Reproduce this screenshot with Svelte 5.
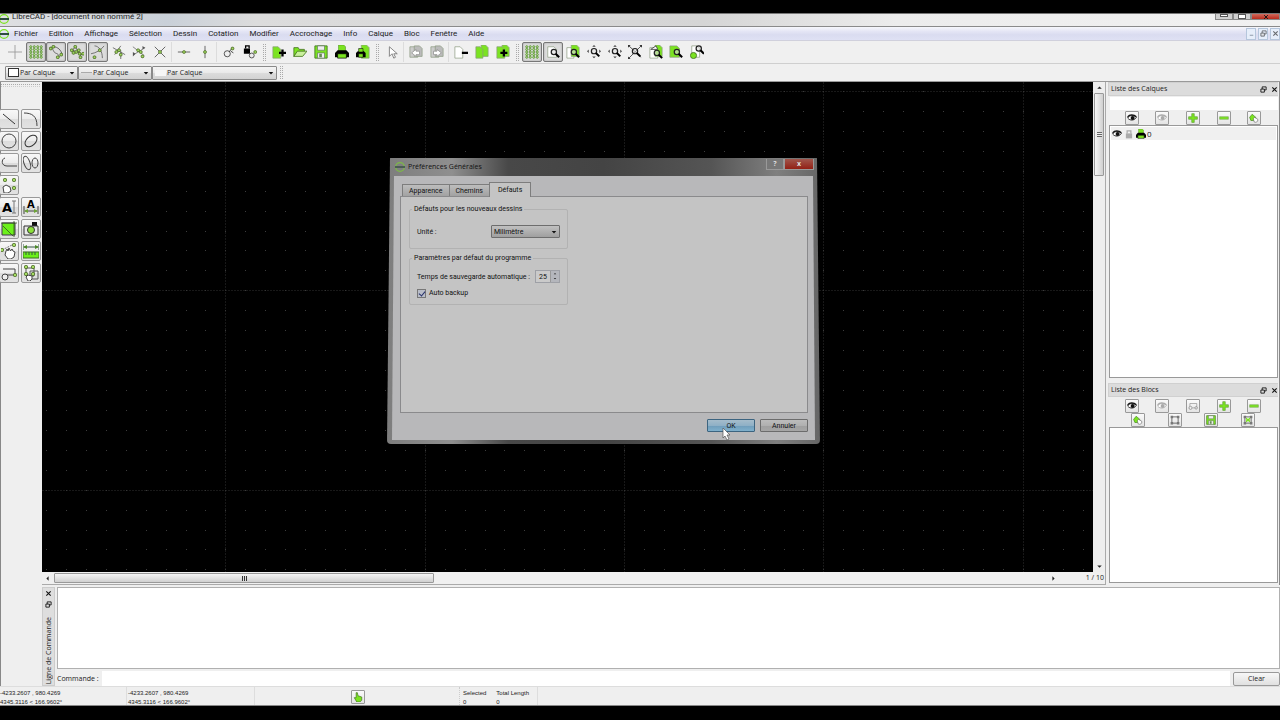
<script>
	const menus = [
		'Fichier', 'Edition', 'Affichage', 'Sélection', 'Dessin', 'Cotation', 'Modifier',
		'Accrochage', 'Info', 'Calque', 'Bloc', 'Fenêtre', 'Aide'
	];

	// every icon is drawn on a 16 x 16 box
	const G = '#7be321';
	const dot = (x, y) =>
		`<rect x="${x - 1.5}" y="${y - 1.5}" width="3" height="3" rx="1" fill="#a4dc62" stroke="#4b6b25"/>`;
	const lens = (x, y) =>
		`<circle cx="${x}" cy="${y}" r="3" fill="#ddd" fill-opacity=".6" stroke="#222" stroke-width="1.4"/><path d="M${x + 2} ${y + 2}l4 4" stroke="#000" stroke-width="2.4"/>`;
	const sheet = (x, y, w, h, fill) =>
		`<path d="M${x} ${y}h${w - 3}l3 3v${h - 3}h-${w}z" fill="${fill}" stroke="#8a9a80" stroke-width=".8"/>`;
	const arrows =
		'<path d="M8 0l2 2H6zM8 15l2-2H6zM0 7l2-2v4zM16 7l-2-2v4z" fill="#444"/>';
	const printer = `<path d="M4 0h6l2 2v5H4z" fill="${G}" stroke="#4a8a18" stroke-width=".6"/><path d="M3 6h10l3 3v5H0V9z" fill="#000"/><path d="M3 10h10v5H3z" fill="${G}" stroke="#000" stroke-width=".8"/>`;
	const eye = (c) =>
		`<path d="M1 8C4 3 11 3 15 7C12 12 5 13 1 8z" fill="#fff" stroke="${c}" stroke-width="1.4"/><circle cx="9" cy="8" r="3.2" fill="${c}"/><path d="M1 6C4 2 11 2 15 6" fill="none" stroke="${c}" stroke-width="2"/>`;
	const hand =
		'<path d="M5 8l1-2 1 2 1-3 1.500 3 1.500-2 1 2 2 1-1 5-3 2H7L4 12z" fill="#fff" stroke="#444"/>';
	const edit = `<path d="M1 7l4-5 6 5-3 5H3z" fill="${G}" stroke="#3f7f18"/><path d="M7 9l2-2 5 3v3l-3 2-3-1z" fill="#fff" stroke="#666"/>`;
	const frame =
		'<path d="M3 3h10v10H3z" fill="none" stroke="#444" stroke-width="1.2"/><path d="M1 1h4v4H1zM11 1h4v4h-4zM1 11h4v4H1zM11 11h4v4h-4z" fill="#777"/>';
	const disk = `<path d="M1 1h14v14H1z" fill="${G}" stroke="#447722"/><path d="M4 1h8v5H4zM4 9h8v6H4z" fill="#eee" stroke="#667766" stroke-width=".8"/><path d="M6 10h3v4H6z" fill="#668855"/>`;

	let dots = '';
	for (const x of [2, 6, 10, 14])
		for (const y of [2, 5, 8, 11, 14])
			dots += `<circle cx="${x}" cy="${y}" r="1.200" fill="#c8e8a0" stroke="#4b8a25" stroke-width=".9"/>`;

	const icons = {
		cross: '<path d="M8 0v16M0 8h16" stroke="#999"/>',
		grid: dots,
		endpoint: `<path d="M1 3c3-1 4 5 6 6s4 1 5 5M5 2c5 0 9 4 10 9" fill="none" stroke="#555"/>${dot(2, 4)}${dot(5, 2)}${dot(10, 14)}${dot(14, 11)}`,
		onentity: `<path d="M2 7L6 2 12 12 15 9M1 5l12 5" fill="none" stroke="#555"/>${dot(2, 6)}${dot(6, 2)}${dot(7, 8)}${dot(4, 9)}${dot(10, 6)}${dot(11, 10)}${dot(12, 14)}${dot(15, 10)}`,
		center: `<path d="M4 1c5 0 9 6 9 14M0 10C6 9 11 6 15 1" fill="none" stroke="#666"/>${dot(10, 6)}${dot(4, 14)}`,
		middle: `<path d="M1 3l14 8M10 1L3 11M10 6v10" fill="none" stroke="#666"/>${dot(8, 6)}${dot(5, 8)}${dot(10, 11)}`,
		distance: `<path d="M1 2l13 10M2 11L15 3" stroke="#777"/><path d="M1 8l3 2-3 3zM12 1l3 2-3 2z" fill="#555"/>${dot(7, 6)}${dot(10, 8)}${dot(12, 13)}`,
		intersect: `<path d="M2 2l12 12M14 2L2 14" stroke="#555"/>${dot(8, 8)}`,
		horizontal: `<path d="M1 8h14" stroke="#555"/>${dot(8, 8)}`,
		vertical: `<path d="M8 1v14" stroke="#555"/>${dot(8, 8)}`,
		relzero: `<circle cx="6" cy="10" r="3.500" fill="#eee" stroke="#444"/><path d="M8 8l4-5M10 7l3 2" stroke="#333"/>${dot(12, 4)}`,
		lockzero: `<path d="M1 4h7v6H1z" fill="#000"/><path d="M3 4V1h4v3" fill="none" stroke="#000" stroke-width="1.500"/><circle cx="10" cy="12" r="2.800" fill="#eee" stroke="#444"/>${dot(14, 8)}`,
		newdoc: `${sheet(1, 2, 9, 13, G)}<path d="M12 5v8M8 9h8" stroke="#000" stroke-width="2.600"/>`,
		open: `<path d="M1 13V3h5l1 2h6v3H5z" fill="${G}" stroke="#4b7a25"/><path d="M1 13L5 7h11l-5 6z" fill="#c9f09c" stroke="#4b7a25"/>`,
		save: disk,
		print: printer,
		preview: `${sheet(6, 0, 9, 15, G)}<path d="M2 7h7l2 2v5H0V9z" fill="#000"/><path d="M3 4h5v4H3zM3 10h5v4H3z" fill="${G}" stroke="#000" stroke-width=".6"/>`,
		pointer: '<path d="M5 2v11l3-3 2 5 2-1-2-4h4z" fill="#fff" stroke="#777"/>',
		undo: `${sheet(1, 2, 9, 12, '#ccc')}${sheet(6, 1, 9, 12, '#bbb')}<path d="M3 9l5-4v2h4v4H8v2z" fill="#fff" stroke="#999"/>`,
		redo: `${sheet(1, 2, 9, 12, '#ccc')}${sheet(6, 1, 9, 12, '#bbb')}<path d="M13 9L8 5v2H4v4h4v2z" fill="#fff" stroke="#999"/>`,
		cut: `${sheet(1, 2, 9, 13, '#fff')}<path d="M9 9h7" stroke="#000" stroke-width="2.600"/>`,
		copy: `${sheet(7, 0, 8, 13, G)}${sheet(1, 2, 8, 13, G)}`,
		paste: `${sheet(7, 0, 8, 13, G)}${sheet(1, 2, 9, 13, G)}<path d="M9 5v8M5 9h8" stroke="#000" stroke-width="2.600"/>`,
		zoomdraft: `${sheet(2, 2, 10, 12, '#fff')}${lens(9, 8)}`,
		zoomredraw: `${sheet(1, 3, 8, 12, '#fff')}${sheet(6, 0, 9, 13, G)}${lens(9, 8)}`,
		zoomin: `${arrows}${lens(8, 7)}`,
		zoomout: `${arrows}${lens(8, 7)}`,
		zoomauto: `<path d="M1 1l14 13M15 1L1 15" stroke="#444"/><path d="M0 0h3L0 3zM16 0h-3l3 3zM0 16h3l-3-3z" fill="#333"/>${lens(8, 7)}`,
		zoomprev: `${sheet(1, 3, 9, 12, '#fff')}${sheet(7, 0, 8, 13, G)}<path d="M2 5l6-4 2 4z" fill="#fff" stroke="#444"/>${lens(9, 9)}`,
		zoomwin: `${sheet(1, 1, 11, 13, G)}${lens(9, 8)}`,
		zoompan: `${sheet(2, 1, 9, 13, '#fff')}<circle cx="4" cy="12" r="3.500" fill="${G}" stroke="#447722"/>${lens(10, 4)}`,
		line: '<path d="M2 3l12 10" stroke="#333"/>',
		arc: '<path d="M1 2c8 0 13 3 13 13" fill="none" stroke="#444"/>',
		circle: '<circle cx="8" cy="8" r="7" fill="none" stroke="#444"/>',
		ellipse: '<ellipse cx="8" cy="8" rx="7" ry="4.500" transform="rotate(-42 8 8)" fill="none" stroke="#333"/>',
		polyline: '<path d="M4 3C0 4 0 11 6 11h10" fill="none" stroke="#444"/>',
		spline: '<ellipse cx="4" cy="8" rx="3" ry="7" transform="rotate(-20 4 8)" fill="none" stroke="#444"/><ellipse cx="12" cy="8" rx="3" ry="5" fill="none" stroke="#444"/>',
		select: `${dot(4, 3)}${dot(13, 3)}${dot(13, 11)}<path d="M2 10l3-2 4 2 1 4-3 2H3z" fill="#fff" stroke="#444"/>`,
		text: '<text x="1" y="13" font-size="13" font-weight="bold" font-family="DejaVu Sans" fill="#000">A</text><path d="M13 2v12M11 2h4M11 14h4" stroke="#777"/>',
		dimension: `<text x="4" y="9" font-size="10" font-weight="bold" font-family="DejaVu Sans" fill="#000">A</text><path d="M1 7v8M15 7v8M2 12h12" stroke="#444"/><path d="M1 12l4-2v4zM15 12l-4-2v4z" fill="#6da536"/>`,
		hatch: `<path d="M1 2h13v12H1z" fill="#6cf01a" stroke="#435"/><path d="M2 5l10 10M0 2h16M13 0v16" stroke="#355020" stroke-width=".8"/>`,
		camera: '<path d="M9 1h5v4H9z" fill="#111"/><path d="M1 5h14v9H1z" fill="#e8e8e8" stroke="#333"/><circle cx="8" cy="9" r="3.500" fill="#8be03a" stroke="#333"/>',
		modify: `<path d="M1 7L13 1" stroke="#777" stroke-dasharray="2 1"/>${dot(13, 2)}${dot(1, 7)}${hand}`,
		measure: `<path d="M0 9h16v6H0z" fill="#6cf01a" stroke="#3d7020"/><path d="M3 9v3M6 9v3M9 9v3M12 9v3M1 4h14M0 1v6M16 1v6" stroke="#354"/><path d="M0 4l4-2v4zM16 4l-4-2v4z" fill="#4b8a25"/>`,
		block: `<path d="M2 4h12v6H5" fill="none" stroke="#444"/><circle cx="4" cy="12" r="3" fill="#eee" stroke="#444"/>${dot(14, 10)}`,
		group: `<path d="M3 3h8v8H3zM7 6h8v8H7z" fill="none" stroke="#555"/>${dot(3, 2)}${dot(10, 2)}${dot(3, 9)}${dot(10, 9)}<path d="M3 12l2-2 4 1v3l-2 2H5z" fill="#fff" stroke="#444"/>`,
		show: eye('#111'),
		hide: eye('#aaa'),
		add: `<path d="M6 1h4v5h5v4h-5v5H6v-5H1V6h5z" fill="${G}" stroke="#5a9a30"/>`,
		remove: `<path d="M1 6h14v4H1z" fill="${G}" stroke="#7aaa58"/>`,
		edit,
		rename: '<path d="M3 9V4h11v6M7 11h4" fill="none" stroke="#888"/><circle cx="4" cy="11" r="2.500" fill="#eee" stroke="#777"/><circle cx="13" cy="11" r="2" fill="#eee" stroke="#777"/>',
		editblock: frame,
		saveblock: disk,
		insert: `${frame}<path d="M5 5l6 6M11 5l-6 6M5 8h6" stroke="${G}" stroke-width="2"/>`,
		lock: '<path d="M3 7h10v8H3z" fill="#aaa"/><path d="M5 7V3h6v4" fill="none" stroke="#aaa" stroke-width="2"/>',
		float: '<path d="M5 2h9v7H5z" fill="none" stroke="#111" stroke-width="2"/><path d="M2 7h8v7H2z" fill="#ddd" stroke="#111" stroke-width="2"/>',
		close: '<path d="M3 3l10 10M13 3L3 13" stroke="#111" stroke-width="2.500"/>',
		minimize: '<path d="M4 12h8" stroke="#456" stroke-width="2"/>',
		touch: `<path d="M5 1l2 0 1 5 6 2v5l-3 3H6L2 9l3 0z" fill="#7be321" stroke="#386818"/>`,
		logo: `<circle cx="8" cy="8" r="7" fill="none" stroke="${G}" stroke-width="2"/><path d="M0 8h16" stroke="#243" stroke-width="3"/>`,
		down: '<path d="M2 5h12l-6 7z" fill="#111"/>',
		arrowup: '<path d="M4 10l4-4 4 4z" fill="#222"/>',
		arrowdown: '<path d="M4 6l4 4 4-4z" fill="#222"/>',
		arrowleft: '<path d="M10 4L6 8l4 4z" fill="#222"/>',
		arrowright: '<path d="M6 4l4 4-4 4z" fill="#222"/>'
	};

	const toolbar = [
		{ width: 165, start: '', items: ['cross', 'grid', 'endpoint', 'onentity', 'center', 'middle', 'distance', 'intersect'] },
		{ width: 41, start: 'sep', items: ['horizontal', 'vertical'] },
		{ width: 41, start: 'sep', items: ['relzero', 'lockzero'] },
		{ width: 104, start: 'handle', items: ['newdoc', 'open', 'save', 'print', 'preview'] },
		{ width: 20, start: 'handle', items: ['pointer'] },
		{ width: 41, start: 'sep', items: ['undo', 'redo'] },
		{ width: 62, start: 'sep', items: ['cut', 'copy', 'paste'] },
		{ width: 185, start: 'handle', items: ['grid', 'zoomdraft', 'zoomredraw', 'zoomin', 'zoomout', 'zoomauto', 'zoomprev', 'zoomwin', 'zoompan'] }
	];
	const pressed = ['grid', 'endpoint', 'onentity', 'center', 'zoomdraft'];

	const tools = [
		'line', 'arc', 'circle', 'ellipse', 'polyline', 'spline', 'select', '',
		'text', 'dimension', 'hatch', 'camera', 'modify', 'measure', 'block', 'group'
	];
	const layerTools = ['show', 'hide', 'add', 'remove', 'edit'];
	const blockTools = ['show', 'hide', 'rename', 'add', 'remove'];
	const blockTools2 = ['edit', 'editblock', 'saveblock', 'insert'];

	// drawing grid: a dot every step, a dotted line every ten
	const step = 299 / 15;
	const left = 4;
	const top = 9;
	let gridDots = '';
	let gridLines = '';
	for (let i = 0; i < 100; i++) {
		const x = Math.round(left + i * step);
		for (let j = 0; j < 60; j++) gridDots += `M${x} ${Math.round(top + j * step)}h1`;
		if (i % 10 === 9) gridLines += `M${x} 0v1200`;
		if (i % 10 === 0) gridLines += `M0 ${Math.round(top + i * step)}h2000`;
	}

	let autosave = $state(25);
	let backup = $state(true);
</script>

{#snippet icon(name)}
	<svg class="icon" viewBox="0 0 16 16" fill="none" aria-hidden="true">{@html icons[name]}</svg>
{/snippet}

{#snippet dockTitle(text)}
	<header class="dock-title">
		<h2>{text}</h2>
		<button class="bare" aria-label="Détacher">{@render icon('float')}</button>
		<button class="bare" aria-label="Fermer">{@render icon('close')}</button>
	</header>
{/snippet}

{#snippet smallTools(items)}
	<div class="small-tools">
		{#each items as name}
			<button class="small" aria-label={name}>{@render icon(name)}</button>
		{/each}
	</div>
{/snippet}

<div class="window">
	<header class="titlebar">
		{@render icon('logo')}
		<h1>LibreCAD - [document non nommé 2]</h1>
		<div class="caption">
			<button aria-label="Réduire"><i class="bar"></i></button>
			<button aria-label="Agrandir"><i class="box"></i></button>
			<button class="red" aria-label="Quitter">{@render icon('close')}</button>
		</div>
	</header>

	<nav class="menubar">
		{@render icon('logo')}
		{#each menus as menu}
			<button class="menu">{menu}</button>
		{/each}
		<div class="mdi">
			<button aria-label="Réduire le document">{@render icon('minimize')}</button>
			<button aria-label="Restaurer le document">{@render icon('float')}</button>
			<button aria-label="Fermer le document">{@render icon('close')}</button>
		</div>
	</nav>

	<div class="toolbar">
		{#each toolbar as group}
			{#if group.start}<i class={group.start}></i>{/if}
			<div class="group" style="width: {group.width}px">
				{#each group.items as name}
					<button class="tool" class:pressed={pressed.includes(name)} aria-label={name}>
						{@render icon(name)}
					</button>
				{/each}
			</div>
		{/each}
	</div>

	<div class="toolbar pens">
		<div class="combo color">
			<i class="swatch"></i>
			<select aria-label="Couleur"><option>Par Calque</option></select>
			{@render icon('down')}
		</div>
		<div class="combo width">
			<i class="stroke"></i>
			<select aria-label="Largeur"><option>Par Calque</option></select>
			{@render icon('down')}
		</div>
		<div class="combo type">
			<i class="stroke blank"></i>
			<select aria-label="Type de ligne"><option>Par Calque</option></select>
			{@render icon('down')}
		</div>
		<i class="handle"></i>
	</div>

	<main>
		<aside class="palette">
			<i class="grip"></i>
			<div class="palette-grid">
				{#each tools as name}
					{#if name}
						<button aria-label={name}>{@render icon(name)}</button>
					{:else}
						<span></span>
					{/if}
				{/each}
			</div>
		</aside>

		<div class="work">
			<div class="upper">
				<section class="view">
					<div class="canvas-row">
						<div class="canvas">
							<svg class="drawing" aria-hidden="true">
								<path d={gridDots} stroke="#3c3c3c" transform="translate(0 .5)" />
								<path d={gridLines} stroke="#303030" stroke-dasharray="1 2" transform="translate(.5 .5)" />
							</svg>

							<div class="dialog" role="dialog" aria-label="Préférences Générales">
								<div class="dialog-title">
									{@render icon('logo')}
									<h2>Préférences Générales</h2>
									<div class="dialog-caption">
										<button aria-label="Aide">?</button>
										<button class="red" aria-label="Fermer">x</button>
									</div>
								</div>
								<form class="dialog-body" onsubmit={(e) => e.preventDefault()}>
									<div class="tabs" role="tablist">
										<button type="button" role="tab" aria-selected="false">Apparence</button>
										<button type="button" role="tab" aria-selected="false">Chemins</button>
										<button type="button" role="tab" class="active" aria-selected="true">Défauts</button>
									</div>
									<div class="pane">
										<fieldset>
											<legend>Défauts pour les nouveaux dessins</legend>
											<div class="field">
												<label for="unit">Unité :</label>
												<div class="combo unit">
													<select id="unit"><option>Milimètre</option></select>
													{@render icon('down')}
												</div>
											</div>
										</fieldset>
										<fieldset class="second">
											<legend>Paramètres par défaut du programme</legend>
											<div class="field">
												<label for="autosave">Temps de sauvegarde automatique :</label>
												<div class="spin">
													<input id="autosave" type="number" bind:value={autosave} />
													<div class="spin-buttons">
														<button type="button" aria-label="Plus" onclick={() => autosave++}>{@render icon('arrowup')}</button>
														<button type="button" aria-label="Moins" onclick={() => autosave--}>{@render icon('arrowdown')}</button>
													</div>
												</div>
											</div>
											<label class="check">
												<input type="checkbox" bind:checked={backup} />
												Auto backup
											</label>
										</fieldset>
									</div>
									<div class="actions">
										<button class="push ok">OK</button>
										<button class="push" type="button">Annuler</button>
									</div>
								</form>
								<svg class="cursor" viewBox="0 0 10 14" aria-hidden="true">
									<path d="M1 1v10l2-2 2 4 2-1-2-4h3z" fill="#fff" stroke="#555" stroke-width=".7" />
								</svg>
							</div>
						</div>
						<div class="vscroll">
							{@render icon('arrowup')}
							<div class="thumb"><i></i></div>
							{@render icon('arrowdown')}
						</div>
					</div>
					<div class="bottom-row">
						<div class="hscroll">
							{@render icon('arrowleft')}
							<div class="thumb"><i></i></div>
							{@render icon('arrowright')}
						</div>
						<span class="zoom">1 / 10</span>
					</div>
				</section>

				<aside class="docks">
					<section class="layers">
						{@render dockTitle('Liste des Calques')}
						<input class="filter" aria-label="Filtre des calques" />
						{@render smallTools(layerTools)}
						<ul class="list">
							<li>{@render icon('show')}{@render icon('lock')}{@render icon('print')}<span>0</span></li>
						</ul>
					</section>
					<section class="blocks">
						{@render dockTitle('Liste des Blocs')}
						{@render smallTools(blockTools)}
						{@render smallTools(blockTools2)}
						<ul class="list"></ul>
					</section>
				</aside>
			</div>

			<section class="command">
				<header class="command-title">
					<button class="bare" aria-label="Fermer">{@render icon('close')}</button>
					<button class="bare" aria-label="Détacher">{@render icon('float')}</button>
					<h2>Ligne de Commande</h2>
				</header>
				<div class="command-body">
					<div class="output"></div>
					<div class="prompt">
						<label for="command">Commande :</label>
						<input id="command" />
						<button class="clear">Clear</button>
					</div>
				</div>
			</section>
		</div>
	</main>

	<footer class="status">
		<div class="coords">-4233.2607 , 980.4269<br />4345.3116 &lt; 166.9602°</div>
		<div class="coords">-4233.2607 , 980.4269<br />4345.3116 &lt; 166.9602°</div>
		<div class="mouse"><button class="small" aria-label="Souris">{@render icon('touch')}</button></div>
		<div class="selection">
			<div>Selected<br />0</div>
			<div>Total Length<br />0</div>
		</div>
	</footer>
</div>

<style>
	:global(body) {
		background: #000;
	}
	.window {
		box-sizing: border-box;
		height: 100vh;
		padding: 13px 0 14px;
		display: flex;
		flex-direction: column;
		overflow: hidden;
		background: #000;
		color: #222;
		font: 7px/10px 'Open Sans', sans-serif;
	}
	.window :global(*) {
		box-sizing: border-box;
	}
	button,
	input,
	select {
		font: inherit;
		color: inherit;
		margin: 0;
		padding: 0;
		border: 0;
		background: none;
		border-radius: 0;
	}
	h1,
	h2 {
		margin: 0;
		font: inherit;
		white-space: nowrap;
	}
	.icon {
		display: block;
		flex: none;
		width: 14px;
		height: 14px;
	}
	.red {
		background: linear-gradient(#d06a5c, #b92a1a);
	}

	.titlebar {
		flex: none;
		height: 14px;
		display: flex;
		align-items: flex-start;
		gap: 3px;
		overflow: hidden;
		background: linear-gradient(90deg, #dfe0e2, #c9d0d8 13%, #dcdcdc 20%, #d5d5d5 55%, #ececec 70%, #f1f1f1);
		border-top: 1px solid #777;
		border-bottom: 1px solid #8a8a8a;
		font: 8px/6px Roboto, sans-serif;
	}
	.titlebar > .icon,
	.menubar > .icon {
		width: 10px;
		height: 10px;
		margin-left: -1px;
	}
	.caption {
		margin-left: auto;
		display: flex;
		height: 6px;
	}
	.caption button {
		width: 18px;
		height: 6px;
		display: flex;
		justify-content: center;
		background-color: #cfcfcf;
		border: 1px solid #888;
		border-top: 0;
	}
	.caption .red {
		width: 29px;
		background-color: #c53b2b;
	}
	.caption .icon {
		width: 8px;
		height: 6px;
	}
	.bar,
	.box {
		width: 8px;
		height: 3px;
		background: #fff;
		border: 1px solid #555;
	}
	.box {
		height: 5px;
	}

	.menubar {
		flex: none;
		height: 14px;
		display: flex;
		align-items: center;
		gap: 11px;
		background: linear-gradient(#f6f7fc, #e4e5f5 35%, #dadcf0 60%, #dfe1f4);
		border-bottom: 1px solid #d0d0dc;
		font: 8px/10px Roboto, sans-serif;
	}
	.menubar > .icon {
		margin-right: -6px;
	}
	.menu {
		white-space: nowrap;
	}
	.mdi {
		margin-left: auto;
		display: flex;
		gap: 2px;
	}
	.mdi button {
		width: 10px;
		height: 12px;
		display: grid;
		place-items: center;
		background: #e6eefa;
		border: 1px solid #b5c6dc;
	}
	.mdi .icon {
		width: 7px;
		height: 7px;
		opacity: 0.6;
	}

	.toolbar {
		flex: none;
		height: 23px;
		padding-left: 5px;
		display: flex;
		align-items: center;
		background: #f0f0f0;
		border-bottom: 1px solid #cfcfcf;
	}
	.group {
		display: flex;
		justify-content: space-between;
	}
	.tool {
		width: 20px;
		height: 20px;
		display: grid;
		place-items: center;
	}
	.pressed {
		background: #dcdcdc;
		border: 1px solid #777;
		border-radius: 2px;
		box-shadow: inset 0 0 2px #999;
	}
	.sep {
		width: 1px;
		height: 20px;
		margin: 0 2px 0 1px;
		background: #dcdcdc;
	}
	.handle {
		width: 3px;
		height: 17px;
		margin: 0 3px;
		border-left: 1px dotted #aaa;
		border-right: 1px dotted #aaa;
	}
	.pens {
		height: 18px;
		border-bottom: 1px solid #999;
	}
	.pens .handle {
		height: 13px;
	}
	.combo {
		position: relative;
		height: 14px;
		padding-left: 2px;
		display: flex;
		align-items: center;
		background: linear-gradient(#f4f4f4, #e9e9e9 50%, #dcdcdc 52%, #d2d2d2);
		border: 1px solid #8a8a8a;
		border-radius: 1px;
	}
	.combo select {
		appearance: none;
		flex: 1;
		min-width: 0;
		height: 12px;
	}
	.combo .icon {
		position: absolute;
		right: 2px;
		width: 6px;
		height: 6px;
		pointer-events: none;
	}
	.color {
		width: 73px;
	}
	.width {
		width: 74px;
	}
	.type {
		width: 125px;
	}
	.swatch {
		width: 11px;
		height: 9px;
		margin-right: 1px;
		background: #fff;
		border: 1px solid #333;
	}
	.stroke {
		width: 11px;
		height: 1px;
		margin-right: 1px;
		background: #aaa;
	}
	.blank {
		height: 6px;
		background: #f6f6f6;
	}

	main {
		flex: 1;
		min-height: 0;
		display: flex;
		background: #efefef;
	}
	.palette {
		flex: none;
		width: 42px;
		border-left: 1px solid #888;
	}
	.grip {
		display: block;
		height: 3px;
		margin: 2px 2px 22px 0;
		border-top: 1px dotted #aaa;
		border-bottom: 1px dotted #ccc;
	}
	.palette-grid {
		display: grid;
		grid-template-columns: 20px 20px;
		grid-auto-rows: 20px;
		gap: 2px;
		margin-left: -2px;
	}
	.palette button {
		display: grid;
		place-items: center;
		background: linear-gradient(#f8f8f8, #ececec 50%, #dcdcdc 52%, #e2e2e2);
		border: 1px solid #999;
		border-radius: 2px;
	}
	.palette .icon {
		width: 16px;
		height: 16px;
	}

	.work {
		flex: 1;
		min-width: 0;
		display: flex;
		flex-direction: column;
	}
	.upper {
		flex: 1;
		min-height: 0;
		display: flex;
	}
	.view {
		flex: 1;
		min-width: 0;
		display: flex;
		flex-direction: column;
		border-right: 1px solid #aaa;
		border-bottom: 1px solid #aaa;
	}
	.canvas-row {
		flex: 1;
		min-height: 0;
		display: flex;
	}
	.canvas {
		position: relative;
		flex: 1;
		min-width: 0;
		background: #000;
	}
	.drawing {
		position: absolute;
		width: 100%;
		height: 100%;
	}
	.thumb {
		display: grid;
		place-items: center;
		border: 1px solid #999;
		border-radius: 1px;
	}
	.vscroll {
		flex: none;
		width: 12px;
		display: flex;
		flex-direction: column;
		align-items: center;
		background: #eee;
	}
	.vscroll .icon,
	.hscroll .icon {
		width: 11px;
		height: 11px;
		padding: 1px;
	}
	.vscroll .thumb {
		width: 10px;
		height: 83px;
		margin-bottom: auto;
		background: linear-gradient(90deg, #f5f5f5, #d0d0d0);
	}
	.vscroll .thumb i {
		width: 5px;
		height: 5px;
		background: repeating-linear-gradient(#666 0 1px, #eee 1px 2px);
	}
	.bottom-row {
		flex: none;
		height: 12px;
		padding-right: 1px;
		display: flex;
		align-items: center;
		justify-content: space-between;
		background: #f0f0f0;
	}
	.hscroll {
		flex: 1;
		margin-right: 27px;
		display: flex;
		align-items: center;
	}
	.hscroll .thumb {
		width: 380px;
		height: 10px;
		margin: 0 auto 0 1px;
		background: linear-gradient(#f5f5f5, #d0d0d0);
	}
	.hscroll .thumb i {
		width: 5px;
		height: 5px;
		background: repeating-linear-gradient(90deg, #333 0 1px, #ddd 1px 2px);
	}
	.zoom {
		white-space: nowrap;
	}

	.docks {
		flex: none;
		width: 174px;
		padding: 0 1px 2px 2px;
		display: flex;
		flex-direction: column;
		gap: 5px;
		border-right: 1px solid #888;
	}
	.docks section {
		display: flex;
		flex-direction: column;
	}
	.layers {
		flex: 296;
	}
	.blocks {
		flex: 200;
	}
	.dock-title {
		height: 14px;
		padding: 0 0 0 2px;
		display: flex;
		align-items: center;
		gap: 4px;
		background: #dcdcdc;
		border: 1px solid #d0d0d0;
		border-right: 0;
	}
	.dock-title h2 {
		margin-right: auto;
	}
	.bare {
		display: grid;
		place-items: center;
	}
	.bare .icon {
		width: 7px;
		height: 7px;
	}
	.filter {
		height: 13px;
		margin: 1px 0 1px 2px;
		background: #fff;
	}
	.small-tools {
		display: flex;
		justify-content: space-evenly;
	}
	.small {
		width: 14px;
		height: 14px;
		display: grid;
		place-items: center;
		background: linear-gradient(#fafafa, #e4e4e4);
		border: 1px solid #999;
		border-radius: 1px;
	}
	.small .icon {
		width: 10px;
		height: 10px;
	}
	.blocks .dock-title {
		margin-bottom: 2px;
	}
	.list {
		flex: 1;
		margin: 0 0 0 1px;
		padding: 1px;
		list-style: none;
		background: #fff;
		border: 1px solid #999;
	}
	.list li {
		height: 13px;
		padding-left: 1px;
		display: flex;
		align-items: center;
		gap: 2px;
		background: #f0f0f0;
	}
	.list .icon {
		width: 10px;
		height: 10px;
	}
	.list span {
		font-size: 8px;
		margin-left: -1px;
	}

	.command {
		flex: none;
		height: 101px;
		padding-top: 2px;
		display: flex;
		gap: 2px;
	}
	.command-title {
		width: 13px;
		padding: 2px 0 1px;
		display: flex;
		flex-direction: column;
		align-items: center;
		gap: 4px;
		background: #dedede;
		border: 1px solid #ccc;
	}
	.command-title h2 {
		margin-top: auto;
		writing-mode: vertical-rl;
		transform: rotate(180deg);
	}
	.command-body {
		flex: 1;
		display: flex;
		flex-direction: column;
		gap: 2px;
	}
	.output {
		flex: 1;
		background: #fff;
		border: 1px solid #b0b0b0;
	}
	.prompt {
		height: 15px;
		display: flex;
		align-items: center;
		gap: 3px;
	}
	.prompt input {
		flex: 1;
		height: 15px;
		background: #fff;
	}
	.clear {
		width: 47px;
		height: 14px;
		background: linear-gradient(#f7f7f7, #e0e0e0);
		border: 1px solid #999;
		border-radius: 2px;
	}

	.status {
		flex: none;
		height: 20px;
		display: flex;
		background: #efefef;
		border-top: 1px solid #ddd;
		border-bottom: 1px solid #888;
		font: 6px/9px 'Liberation Sans', sans-serif;
	}
	.coords {
		width: 128px;
		padding-top: 2px;
		border-right: 1px solid #ddd;
		white-space: nowrap;
	}
	.coords:first-child {
		width: 127px;
	}
	.coords + .coords {
		padding-left: 1px;
	}
	.mouse {
		width: 205px;
		padding: 2px 0 0 1px;
		display: grid;
		place-items: center;
		border-right: 1px dotted #ccc;
	}
	.selection {
		padding: 2px 8px 0 3px;
		display: flex;
		gap: 10px;
		border-right: 1px solid #ddd;
		white-space: nowrap;
	}

	/* fading preferences window, a little wider at its foot */
	.dialog {
		position: absolute;
		left: 345px;
		top: 76px;
		width: 433px;
		padding: 1px 5px 4px 5px;
		background: linear-gradient(90deg, #7d7d7d, #8f8f8f 15%, #484848 28%, #444 50%, #555 75%, #7f7f7f 90%, #666);
		border-radius: 4px;
		clip-path: polygon(3px 0, 430px 0, 100% 100%, 0 100%);
		color: #111;
		font-family: Roboto, sans-serif;
	}
	.dialog-title {
		height: 17px;
		padding: 0 0 2px 3px;
		display: flex;
		align-items: center;
		gap: 3px;
		font-family: 'Open Sans', sans-serif;
	}
	.dialog-title > .icon {
		width: 10px;
		height: 10px;
		opacity: 0.6;
	}
	.dialog-caption {
		align-self: flex-start;
		margin-left: auto;
		margin-right: 1px;
		display: flex;
	}
	.dialog-caption button {
		width: 18px;
		height: 11px;
		line-height: 8px;
		color: #ddd;
		font-weight: bold;
		background-color: #777;
		border: 1px solid #999;
		border-top: 0;
	}
	.dialog-caption .red {
		width: 30px;
		background: linear-gradient(#a0564c, #932015);
	}
	.dialog-body {
		padding: 6px 7px 8px 8px;
		background: #b8b8ba;
		clip-path: polygon(2px 0, calc(100% - 2px) 0, 100% 100%, 0 100%);
	}
	.tabs {
		display: flex;
		align-items: flex-end;
		padding-left: 2px;
		height: 14px;
	}
	.tabs button {
		height: 12px;
		padding: 0 6px;
		background: linear-gradient(#bdbdbd, #a2a2a2);
		border: 1px solid #7d7d7d;
		border-bottom: 0;
		margin-right: -1px;
	}
	.tabs .active {
		position: relative;
		z-index: 1;
		height: 15px;
		margin-bottom: -1px;
		padding: 0 8px;
		background: #c4c4c4;
	}
	.pane {
		height: 217px;
		padding: 7px 8px;
		background: #c4c4c4;
		border: 1px solid #8a8a8c;
	}
	fieldset {
		width: 159px;
		margin: 0;
		padding: 11px 7px 10px;
		border: 1px solid #b2b2b2;
		border-radius: 2px;
	}
	legend {
		margin-left: -5px;
		padding: 0 2px;
	}
	.second {
		margin-top: 4px;
		padding: 7px 7px 6px;
	}
	.field {
		display: flex;
		align-items: center;
		justify-content: space-between;
		white-space: nowrap;
	}
	.unit {
		width: 69px;
		height: 13px;
		background: linear-gradient(#c0c0c0, #9f9f9f);
		border-color: #6d6d6d;
	}
	.unit select {
		height: 11px;
	}
	.spin {
		width: 25px;
		height: 13px;
		display: flex;
		background: #cacaca;
		border: 1px solid #9ea0a6;
	}
	.spin input {
		appearance: textfield;
		width: 14px;
		text-align: center;
	}
	.spin input::-webkit-inner-spin-button {
		appearance: none;
		margin: 0;
	}
	.spin-buttons {
		flex: 1;
		display: flex;
		flex-direction: column;
		background: #b4b6bc;
		border-left: 1px solid #999;
	}
	.spin-buttons button {
		height: 5px;
		display: grid;
		place-items: center;
	}
	.spin-buttons .icon {
		width: 8px;
		height: 5px;
	}
	.check {
		margin-top: 5px;
		display: flex;
		align-items: center;
		gap: 3px;
	}
	.check input {
		appearance: none;
		width: 9px;
		height: 9px;
		background: #b9bdc8;
		border: 1px solid #777;
	}
	.check input:checked::after {
		content: '';
		display: block;
		width: 3px;
		height: 5px;
		margin: 0 0 0 2px;
		border: solid #25306a;
		border-width: 0 1px 1px 0;
		transform: rotate(40deg);
	}
	.actions {
		padding-top: 6px;
		display: flex;
		justify-content: flex-end;
		gap: 5px;
	}
	.push {
		width: 48px;
		height: 13px;
		background: linear-gradient(#bcbcbc, #b0b0b0 50%, #9f9f9f 52%, #a6a6a6);
		border: 1px solid #6c6c6c;
		border-radius: 1px;
	}
	.ok {
		background: linear-gradient(#a5bccb, #8fb0c6 50%, #6f9cba 52%, #7fb0cc);
		border-color: #3c6480;
	}
	.cursor {
		position: absolute;
		left: 335px;
		top: 269px;
		width: 10px;
		height: 14px;
	}
</style>
